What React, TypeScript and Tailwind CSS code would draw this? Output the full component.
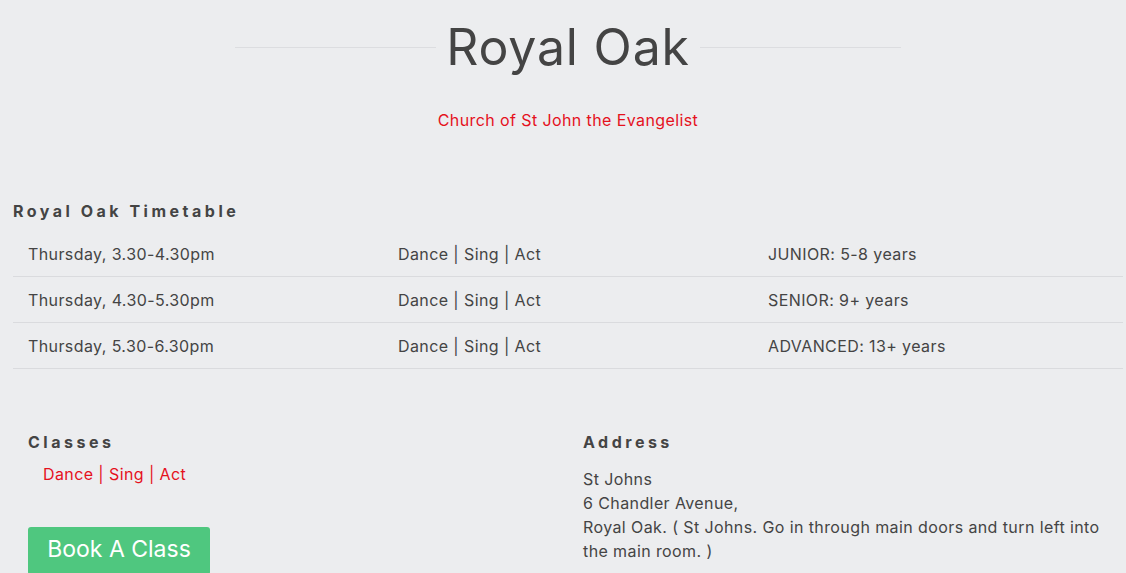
const rows = [
  { time: "Thursday, 3.30-4.30pm", classes: "Dance | Sing | Act", age: "JUNIOR: 5-8 years" },
  { time: "Thursday, 4.30-5.30pm", classes: "Dance | Sing | Act", age: "SENIOR: 9+ years" },
  { time: "Thursday, 5.30-6.30pm", classes: "Dance | Sing | Act", age: "ADVANCED: 13+ years" },
];

const font = { fontFamily: "Inter, 'Noto Sans', sans-serif" };

export default function App() {
  return (
    <div className="min-h-[573px] w-full bg-[#ecedef] text-[#444444]" style={font}>
      <div className="ml-[13px] w-[1110px]">
        {/* heading */}
        <div className="flex justify-center pt-[12px]">
          <div className="flex w-[666px] items-center gap-[10px]">
            <div className="h-px flex-1 bg-[#dcdde0]" />
            <h1 className="text-[50px] font-normal leading-[70px] tracking-[0.8px] text-[#444444]">Royal Oak</h1>
            <div className="h-px flex-1 bg-[#dcdde0]" />
          </div>
        </div>
        <p className="mt-[26px] text-center text-[16px] leading-[24px] tracking-[0.4px] text-[#e5111d]">
          Church of St John the Evangelist
        </p>

        {/* timetable */}
        <h3 className="mt-[67px] text-[16px] font-bold leading-[24px] tracking-[3.5px] text-[#444444]">
          Royal Oak Timetable
        </h3>
        <div className="mt-[8px]">
          {rows.map((r) => (
            <div
              key={r.time}
              className="grid h-[46px] grid-cols-3 items-center border-b border-[#dadbde] text-[16px] tracking-[0.4px]"
            >
              <div className="px-[15px]">{r.time}</div>
              <div className="px-[15px]">{r.classes}</div>
              <div className="px-[15px]">{r.age}</div>
            </div>
          ))}
        </div>

        {/* info */}
        <div className="mt-[61px] grid grid-cols-2">
          <div className="px-[15px]">
            <h4 className="text-[16px] font-bold leading-[24px] tracking-[3.5px]">Classes</h4>
            <p className="mt-[8px] pl-[15px] text-[16px] leading-[24px] tracking-[0.4px] text-[#e5111d]">
              Dance | Sing | Act
            </p>
            <button className="mt-[41px] flex h-[48px] w-[182px] items-start justify-center rounded-[3px] bg-[#4fc77f] pt-[7px] text-[23px] leading-[30px] text-white">
              Book A Class
            </button>
          </div>
          <div className="px-[15px]">
            <h4 className="text-[16px] font-bold leading-[24px] tracking-[3.5px]">Address</h4>
            <p className="mt-[13px] text-[16px] leading-[24px] tracking-[0.4px]">
              St Johns
              <br />
              6 Chandler Avenue,
              <br />
              Royal Oak. ( St Johns. Go in through main doors and turn left into the main room. )
            </p>
          </div>
        </div>
      </div>
    </div>
  );
}
